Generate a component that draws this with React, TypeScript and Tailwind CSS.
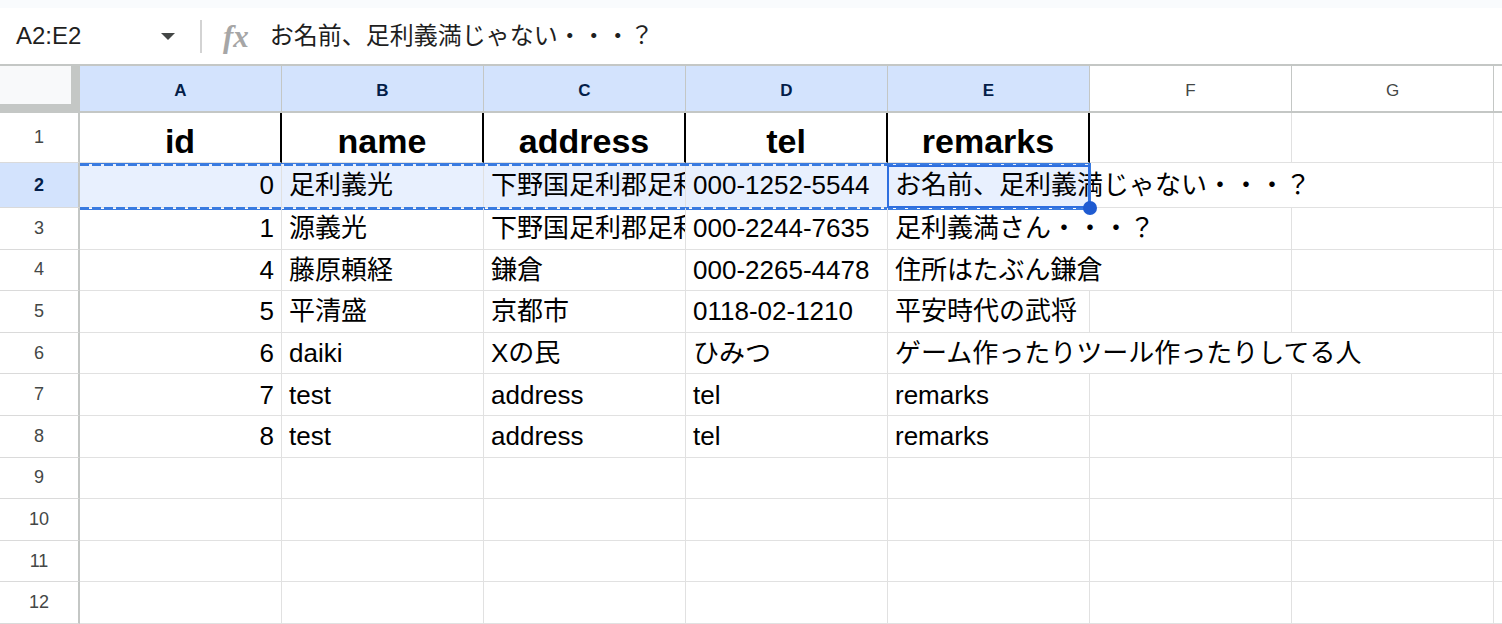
const cols = ['A', 'B', 'C', 'D', 'E', 'F', 'G'];

type Row = {
  n: number;
  h: string;
  cells: string[];
  hide?: number[];
};

const rows: Row[] = [
  { n: 2, h: 'h-[45px]', cells: ['0', '足利義光', '下野国足利郡足利荘', '000-1252-5544', 'お名前、足利義満じゃない・・・？'], hide: [4, 5] },
  { n: 3, h: 'h-[41.6px]', cells: ['1', '源義光', '下野国足利郡足利荘', '000-2244-7635', '足利義満さん・・・？'], hide: [4] },
  { n: 4, h: 'h-[41.6px]', cells: ['4', '藤原頼経', '鎌倉', '000-2265-4478', '住所はたぶん鎌倉'], hide: [4] },
  { n: 5, h: 'h-[41.6px]', cells: ['5', '平清盛', '京都市', '0118-02-1210', '平安時代の武将'] },
  { n: 6, h: 'h-[41.6px]', cells: ['6', 'daiki', 'Xの民', 'ひみつ', 'ゲーム作ったりツール作ったりしてる人'], hide: [4, 5] },
  { n: 7, h: 'h-[41.6px]', cells: ['7', 'test', 'address', 'tel', 'remarks'] },
  { n: 8, h: 'h-[41.6px]', cells: ['8', 'test', 'address', 'tel', 'remarks'] },
  { n: 9, h: 'h-[41.6px]', cells: [] },
  { n: 10, h: 'h-[41.6px]', cells: [] },
  { n: 11, h: 'h-[41.6px]', cells: [] },
  { n: 12, h: 'h-[41.6px]', cells: [] },
];

function App() {
  return (
    <div className="w-[1502px] h-[624px] overflow-hidden bg-white text-black font-['Liberation_Sans','Noto_Sans_CJK_JP',sans-serif]">
      <div className="h-[8px] bg-[#f9fbfd]" />
      <FormulaBar />
      <ColumnHeader />
      <HeaderRow />
      {rows.map((r) => (
        <DataRow key={r.n} row={r} />
      ))}
    </div>
  );
}

function FormulaBar() {
  return (
    <div className="h-[56px] flex items-center">
      <div className="w-[190px] flex items-center justify-between pl-[16px] pr-[15px]">
        <span className="text-[24px] text-[#1f1f1f]">A2:E2</span>
        <span className="w-0 h-0 border-x-[7px] border-x-transparent border-t-[7px] border-t-[#444746]" />
      </div>
      <div className="ml-[10px] w-[2px] h-[33px] bg-[#d3d3d3]" />
      <span className="ml-[21px] font-['Liberation_Serif',serif] italic font-bold text-[31px] leading-none text-[#a6a6a6]">
        fx
      </span>
      <span className="ml-[21px] text-[24px] text-[#1f1f1f]">お名前、足利義満じゃない・・・？</span>
    </div>
  );
}

function ColumnHeader() {
  return (
    <div className="flex h-[49px] border-y-2 border-[#c4c7c5]">
      <div className="w-[80px] shrink-0 bg-[#f8f9fa] border-r-[9px] border-b-[7px] border-[#c4c7c5]" />
      {cols.map((c, i) => (
        <div
          key={c}
          className={`w-[202px] shrink-0 flex items-center justify-center pt-[4px] border-r border-[#c4c7c5] text-[17px] ${
            i < 5 ? 'bg-[#d3e3fd] text-[#041e49] font-bold' : 'text-[#444746]'
          }`}
        >
          {c}
        </div>
      ))}
      <div className="flex-1" />
    </div>
  );
}

function HeaderRow() {
  const titles = ['id', 'name', 'address', 'tel', 'remarks'];
  return (
    <div className="flex h-[50px]">
      <div className="w-[80px] shrink-0 flex items-center justify-center border-r-2 border-r-[#c4c7c5] border-b border-b-[#dadada] text-[18px] text-[#444746]">
        1
      </div>
      {cols.map((c, i) => (
        <div
          key={c}
          className={`w-[202px] shrink-0 flex items-end justify-center pb-[4px] border-b border-b-[#e1e1e1] ${
            i < 5 ? 'border-r-2 border-r-black' : 'border-r border-r-[#e1e1e1]'
          }`}
        >
          {titles[i] && <span className="text-[34px] font-bold leading-none">{titles[i]}</span>}
        </div>
      ))}
      <div className="flex-1 border-b border-[#e1e1e1]" />
    </div>
  );
}

function DataRow({ row }: { row: Row }) {
  const selected = row.n === 2;
  return (
    <div className={`flex relative ${row.h}`}>
      <div
        className={`w-[80px] shrink-0 flex items-center justify-center border-r-2 border-r-[#c4c7c5] border-b border-b-[#dadada] text-[18px] ${
          selected ? 'bg-[#d3e3fd] text-[#041e49] font-bold' : 'text-[#444746]'
        }`}
      >
        {row.n}
      </div>
      {cols.map((c, i) => {
        const text = row.cells[i];
        const hidden = row.hide?.includes(i);
        const clip = i === 2;
        return (
          <div
            key={c}
            className={`w-[202px] shrink-0 flex items-center px-[7px] border-b border-b-[#e1e1e1] ${
              hidden ? '' : 'border-r border-r-[#e1e1e1]'
            } ${i === 0 ? 'justify-end' : 'justify-start'} ${clip ? 'overflow-hidden' : ''} ${
              selected && i < 5 ? 'bg-[#e8f0fe]' : ''
            }`}
          >
            {text && <span className="text-[26px] leading-none whitespace-nowrap">{text}</span>}
          </div>
        );
      })}
      <div className="flex-1 border-b border-[#e1e1e1]" />
      {selected && (
        <>
          {/* copy range marquee */}
          <div className="absolute left-[80px] top-0 w-[1011px] h-[3px] border-t border-[#3a7be0] bg-[image:repeating-linear-gradient(90deg,#3a7be0_0_9px,transparent_9px_12px)] pointer-events-none" />
          <div className="absolute left-[80px] top-[44px] w-[1011px] h-[3px] border-b border-[#3a7be0] bg-[image:repeating-linear-gradient(90deg,#3a7be0_0_9px,transparent_9px_12px)] pointer-events-none" />
          <div className="absolute left-[1088px] top-0 w-[3px] h-[47px] bg-[#3a7be0] pointer-events-none" />
          {/* active cell */}
          <div className="absolute left-[887px] top-[2px] w-[203px] h-[43px] border-2 border-[#2f6fdf] pointer-events-none" />
          <div className="absolute left-[1083px] top-[38px] w-[14px] h-[14px] rounded-full bg-[#1f5bd1]" />
        </>
      )}
    </div>
  );
}

export default App;
